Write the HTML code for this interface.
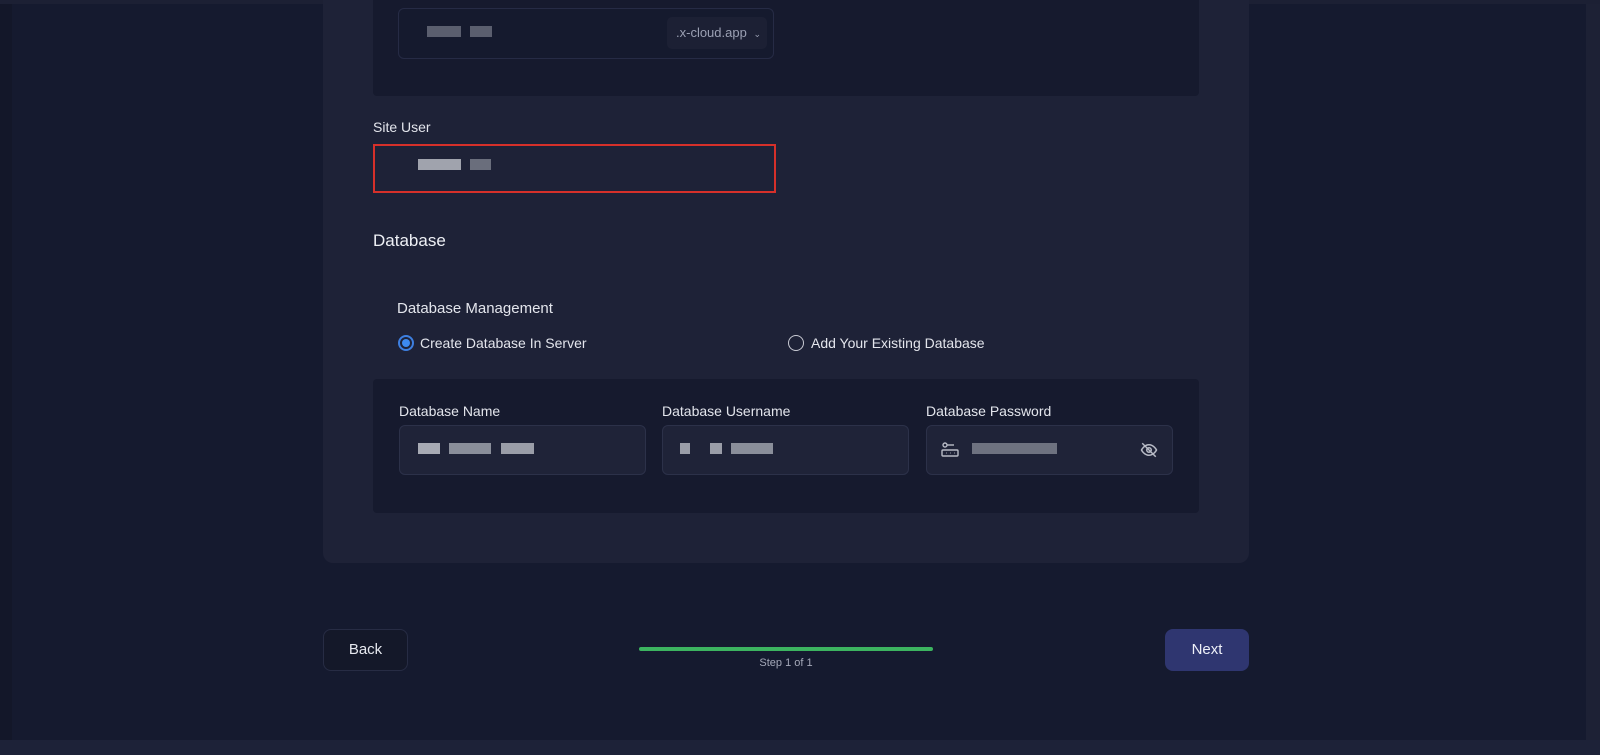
<!DOCTYPE html>
<html><head><meta charset="utf-8"><style>
*{box-sizing:border-box;margin:0;padding:0}
body{width:1600px;height:755px;background:#151a2f;font-family:"Liberation Sans",sans-serif;color:#e6e8ef;position:relative;overflow:hidden}
.a{position:absolute}
.card{left:323px;top:-20px;width:926px;height:583px;background:#1e2237;border-radius:10px}
.panel{background:#161a2e;border-radius:4px}
.inp{background:#1f2338;border:1px solid #2c3149;border-radius:6px}
.lbl{font-size:14px;color:#e3e5ec}
.px{position:absolute;height:11px}
</style></head><body>
<div class="a" style="left:0;top:0;width:12px;height:755px;background:#131729"></div>
<div class="a" style="left:1586px;top:0;width:14px;height:755px;background:#1d2135"></div>
<div class="a" style="left:0;top:740px;width:1600px;height:15px;background:#1d2238"></div>
<div class="a" style="left:0;top:0;width:1600px;height:4px;background:#1c2034"></div>
<div class="a card"></div>
<div class="a panel" style="left:373px;top:-10px;width:826px;height:106px"></div>
<div class="a" style="left:398px;top:8px;width:376px;height:51px;border:1px solid #262b45;border-radius:6px;background:#151a2e"></div>
<div class="px" style="left:427px;top:26px;width:34px;background:#5a5e6e"></div>
<div class="px" style="left:470px;top:26px;width:22px;background:#5a5e6e"></div>
<div class="a" style="left:667px;top:17px;width:100px;height:32px;background:#1c2034;border-radius:5px;font-size:13px;color:#9ba0b3;line-height:32px;padding-left:9px">.x-cloud.app <span style="font-size:9px;margin-left:3px">&#8964;</span></div>
<div class="a lbl" style="left:373px;top:119px">Site User</div>
<div class="a" style="left:373px;top:144px;width:403px;height:49px;border:2px solid #d6302a;background:#1e2237"></div>
<div class="px" style="left:418px;top:159px;width:43px;background:#a0a3ad"></div>
<div class="px" style="left:470px;top:159px;width:21px;background:#6a6e7c"></div>
<div class="a" style="left:373px;top:231px;font-size:17px;color:#eef0f5">Database</div>
<div class="a" style="left:397px;top:300px;font-size:15px;color:#e3e5ec">Database Management</div>
<div class="a" style="left:398px;top:335px;width:16px;height:16px;border-radius:50%;border:2px solid #3d7fe0;background:#1e2237"></div>
<div class="a" style="left:402px;top:339px;width:8px;height:8px;border-radius:50%;background:#3d8af0"></div>
<div class="a" style="left:420px;top:335px;font-size:14px;color:#e3e5ec">Create Database In Server</div>
<div class="a" style="left:788px;top:335px;width:16px;height:16px;border-radius:50%;border:1.5px solid #c8cad3"></div>
<div class="a" style="left:811px;top:335px;font-size:14px;color:#e3e5ec">Add Your Existing Database</div>
<div class="a panel" style="left:373px;top:379px;width:826px;height:134px"></div>
<div class="a lbl" style="left:399px;top:403px">Database Name</div>
<div class="a lbl" style="left:662px;top:403px">Database Username</div>
<div class="a lbl" style="left:926px;top:403px">Database Password</div>
<div class="a inp" style="left:399px;top:425px;width:247px;height:50px"></div>
<div class="a inp" style="left:662px;top:425px;width:247px;height:50px"></div>
<div class="a inp" style="left:926px;top:425px;width:247px;height:50px"></div>
<div class="px" style="left:418px;top:443px;width:22px;background:#a7aab4"></div>
<div class="px" style="left:449px;top:443px;width:42px;background:#8a8e9a"></div>
<div class="px" style="left:501px;top:443px;width:33px;background:#9a9da8"></div>
<div class="px" style="left:680px;top:443px;width:10px;background:#9a9da8"></div>
<div class="px" style="left:710px;top:443px;width:12px;background:#9a9da8"></div>
<div class="px" style="left:731px;top:443px;width:42px;background:#8a8e9a"></div>
<div class="px" style="left:972px;top:443px;width:85px;background:#6e7280"></div>
<svg class="a" style="left:941px;top:442px" width="18" height="16" viewBox="0 0 18 16" fill="none" stroke="#b8bbc6" stroke-width="1.4"><circle cx="4" cy="3" r="2"/><path d="M6 3h7"/><rect x="1" y="8" width="16" height="6" rx="1"/><path d="M5 11h.5M9 11h.5M13 11h.5"/></svg>
<svg class="a" style="left:1140px;top:441px" width="18" height="18" viewBox="0 0 24 24" fill="none" stroke="#b8bbc6" stroke-width="2"><path d="M2 12s3.5-7 10-7 10 7 10 7-3.5 7-10 7S2 12 2 12z"/><circle cx="12" cy="12" r="3"/><path d="M3 3l18 18"/></svg>
<div class="a" style="left:323px;top:629px;width:85px;height:42px;border:1px solid #272c44;border-radius:8px;background:#141829;text-align:center;line-height:40px;font-size:15px;color:#e6e8ef">Back</div>
<div class="a" style="left:639px;top:647px;width:294px;height:4px;background:#3cb460;border-radius:2px"></div>
<div class="a" style="left:639px;top:657px;width:294px;text-align:center;font-size:11px;color:#a4a8b8">Step 1 of 1</div>
<div class="a" style="left:1165px;top:629px;width:84px;height:42px;background:#2f3670;border-radius:8px;text-align:center;line-height:42px;font-size:15px;color:#eef0f8">Next</div>
</body></html>
